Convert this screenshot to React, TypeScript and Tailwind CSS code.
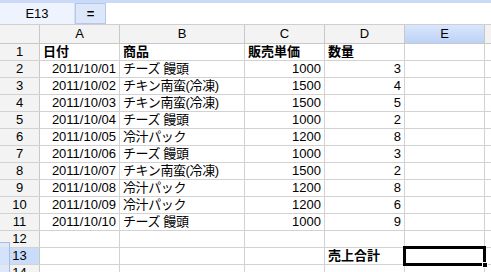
const rows: [string, string, string, string][] = [
  ["2011/10/01", "チーズ 饅頭", "1000", "3"],
  ["2011/10/02", "チキン南蛮(冷凍)", "1500", "4"],
  ["2011/10/03", "チキン南蛮(冷凍)", "1500", "5"],
  ["2011/10/04", "チーズ 饅頭", "1000", "2"],
  ["2011/10/05", "冷汁パック", "1200", "8"],
  ["2011/10/06", "チーズ 饅頭", "1000", "3"],
  ["2011/10/07", "チキン南蛮(冷凍)", "1500", "2"],
  ["2011/10/08", "冷汁パック", "1200", "8"],
  ["2011/10/09", "冷汁パック", "1200", "6"],
  ["2011/10/10", "チーズ 饅頭", "1000", "9"],
];

const cell = "h-full shrink-0 border-r border-[#d2d2d2] px-[3px] overflow-hidden whitespace-nowrap";

function RowHead({ n, active = false }: { n: number; active?: boolean }) {
  return (
    <div
      className={`h-full w-[40px] shrink-0 border-r border-[#c8c8c8] text-center ${
        active ? "bg-[#c9dcf9]" : "bg-[#f3f3f3]"
      }`}
    >
      {n}
    </div>
  );
}

function Row({ n, a = "", b = "", c = "", d = "", e = "", bold = false, active = false }: {
  n: number; a?: string; b?: string; c?: string; d?: string; e?: string; bold?: boolean; active?: boolean;
}) {
  return (
    <div className="flex h-[17px] border-b border-[#d2d2d2] leading-[16px]">
      <RowHead n={n} active={active} />
      <div className={`${cell} w-[80px] ${bold ? "font-bold text-left" : "text-right"}`}>{a}</div>
      <div className={`${cell} w-[125px] ${bold ? "font-bold" : "tracking-[-0.4px]"}`}>{b}</div>
      <div className={`${cell} w-[80px] ${bold ? "font-bold text-left" : "text-right"}`}>{c}</div>
      <div className={`${cell} w-[80px] ${bold && !e ? "font-bold text-left" : "text-right"}`}>{d}</div>
      <div className={`${cell} w-[80px]`}>{e}</div>
      <div className="h-full flex-1" />
    </div>
  );
}

export default function App() {
  return (
    <div
      className="relative h-[272px] w-[491px] overflow-hidden bg-white text-[13px] text-black"
      style={{ fontFamily: '"Liberation Sans", "Noto Sans CJK JP", sans-serif' }}
    >
      {/* formula bar */}
      <div className="flex h-[25px] border-t-[3px] border-t-[#c9d9f6] border-b border-b-[#cfcfcf]">
        <div className="flex w-[75px] items-center justify-center border-r border-[#d6e0f2] bg-[#eef3fd]">E13</div>
        <div className="flex w-[31px] items-center justify-center border border-[#b4c7ee] bg-[#dde7fa] font-bold">=</div>
        <div className="flex-1 bg-white" />
      </div>

      {/* column headers */}
      <div className="flex h-[19px] border-b border-[#c8c8c8] bg-[#f3f3f3] leading-[18px]">
        <div className="h-full w-[40px] shrink-0 border-r border-[#c8c8c8]" />
        <div className="h-full w-[80px] shrink-0 border-r border-[#c8c8c8] text-center">A</div>
        <div className="h-full w-[125px] shrink-0 border-r border-[#c8c8c8] text-center">B</div>
        <div className="h-full w-[80px] shrink-0 border-r border-[#c8c8c8] text-center">C</div>
        <div className="h-full w-[80px] shrink-0 border-r border-[#c8c8c8] text-center">D</div>
        <div className="h-full w-[80px] shrink-0 border-r border-[#c8c8c8] bg-gradient-to-b from-[#d9e6fc] to-[#bcd2f6] text-center">E</div>
        <div className="h-full flex-1" />
      </div>

      <Row n={1} a="日付" b="商品" c="販売単価" d="数量" bold />
      {rows.map((r, i) => (
        <Row key={i} n={i + 2} a={r[0]} b={r[1]} c={r[2]} d={r[3]} />
      ))}
      <Row n={12} />
      <div className="flex h-[17px] border-b border-[#d2d2d2] leading-[16px]">
        <RowHead n={13} active />
        <div className={`${cell} w-[80px]`} />
        <div className={`${cell} w-[125px]`} />
        <div className={`${cell} w-[80px]`} />
        <div className={`${cell} w-[80px] font-bold`}>売上合計</div>
        <div className={`${cell} w-[80px]`} />
        <div className="h-full flex-1" />
      </div>
      <Row n={14} />

      {/* selected cell E13 */}
      <div className="absolute left-[403px] top-[246px] h-[20px] w-[83px] border-[3px] border-black" />
      <div className="absolute left-[482px] top-[262px] h-[6px] w-[6px] border border-white bg-black" />

      {/* row-drag marker */}
      <div className="absolute left-0 top-[242px] h-[30px] w-[10px] border-r border-t border-[#a8bde2] bg-[#d8e5fa]/80" />
    </div>
  );
}
